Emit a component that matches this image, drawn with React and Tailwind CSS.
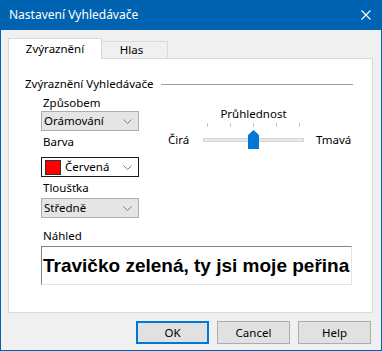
import React from 'react';

const ui = { fontFamily: '"Noto Sans", "Segoe UI", sans-serif' };

function Chevron() {
  return (
    <svg width="9" height="5" viewBox="0 0 9 5" className="shrink-0">
      <path d="M0.5 0.5 L4.5 4.5 L8.5 0.5" fill="none" stroke="#7a7a7a" strokeWidth="1" />
    </svg>
  );
}

function Combo({ children }) {
  return (
    <div className="h-[20px] w-[98px] flex items-center justify-between pl-[2px] pr-[6px] bg-[#e5e5e5] border border-[#adadad] text-[#000]">
      <span>{children}</span>
      <Chevron />
    </div>
  );
}

function Button({ children, primary }) {
  return (
    <div
      className={
        'w-[73px] h-[23px] flex items-center justify-center bg-[#e1e1e1] ' +
        (primary ? 'border-2 border-[#0078d7]' : 'border border-[#adadad]')
      }
    >
      {children}
    </div>
  );
}

export default function App() {
  return (
    <div className="w-[382px] h-[351px] bg-[#0063b1] flex flex-col text-[11.5px] leading-[16px] text-black" style={ui}>
      {/* title bar */}
      <div className="h-[30px] flex items-center justify-between pl-[9px] pr-[11px] text-white text-[12px]">
        <span>Nastavení Vyhledávače</span>
        <svg width="10" height="10" viewBox="0 0 10 10">
          <path d="M0.5 0.5 L9.5 9.5 M9.5 0.5 L0.5 9.5" stroke="#fff" strokeWidth="1.1" />
        </svg>
      </div>

      <div className="flex-1 mx-px mb-px bg-[#f0f0f0] flex flex-col pt-[8px] pl-[7px] pr-[8px]">
        {/* tabs */}
        <div className="flex items-end h-[20px]">
          <div className="relative z-10 w-[94px] h-[21px] -mb-px bg-white border border-b-0 border-[#d9d9d9] flex items-center justify-center">
            Zvýraznění
          </div>
          <div className="w-[66px] h-[17px] border-t border-r border-[#d9d9d9] flex items-center justify-center pr-[6px]">
            Hlas
          </div>
        </div>

        {/* panel */}
        <div className="h-[255px] bg-white border border-[#d9d9d9] pt-[17px] pl-[16px] pr-[19px]">
          <div className="flex items-center h-[16px]">
            <span>Zvýraznění Vyhledávače</span>
            <div className="flex-1 h-px bg-[#a0a0a0] ml-[8px]" />
          </div>

          <div className="flex ml-[16px] mt-[3px]">
            <div className="w-[98px] flex flex-col">
              <div className="pl-[2px] h-[16px]">Způsobem</div>
              <Combo>Orámování</Combo>
              <div className="pl-[2px] h-[16px] mt-[3px]">Barva</div>
              <div className="mt-[7px] h-[20px] w-[98px] flex items-center justify-between pl-[3px] pr-[6px] bg-white border border-[#1a1a1a]">
                <div className="flex items-center gap-[4px]">
                  <div className="w-[16px] h-[15px] bg-[#ff0000] border border-[#333]" />
                  <span>Červená</span>
                </div>
                <Chevron />
              </div>
              <div className="pl-[2px] h-[16px] mt-[3px]">Tloušťka</div>
              <div className="mt-[2px]">
                <Combo>Středně</Combo>
              </div>
            </div>

            <div className="ml-[29px] pt-[11px] flex flex-col">
              <div className="ml-[35px] w-[101px] text-center h-[16px]">Průhlednost</div>
              <div className="ml-[35px] w-[101px] h-[5px] mt-[1px] flex justify-between px-[4px]">
                {[0, 1, 2, 3, 4].map((i) => (
                  <div key={i} className="w-px h-[4px] bg-[#c4c4c4]" />
                ))}
              </div>
              <div className="flex items-center h-[21px] mt-px">
                <span className="w-[35px]">Čirá</span>
                <div className="relative w-[101px] h-[21px]">
                  <div className="absolute left-0 right-0 top-[9px] h-[4px] bg-[#e7eaea] border border-[#d6d6d6]" />
                  <svg className="absolute left-[45px] top-[1px]" width="11" height="19" viewBox="0 0 11 19">
                    <polygon points="0,5 5.5,0 11,5 11,19 0,19" fill="#0078d7" />
                  </svg>
                </div>
                <span className="ml-[12px]">Tmavá</span>
              </div>
            </div>
          </div>

          <div className="ml-[16px] mt-[10px]">
            <div className="pl-[2px] h-[16px]">Náhled</div>
            <div className="mt-[2px] w-[311px] h-[39px] border-t border-l border-[#838383] border-r-[#e3e3e3] border-b-[#e3e3e3] border-r border-b flex items-center pl-[1px] overflow-hidden">
              <span className="font-bold text-[19px] whitespace-nowrap" style={{ fontFamily: '"Liberation Sans", Arial, sans-serif' }}>
                Travičko zelená, ty jsi moje peřina
              </span>
            </div>
          </div>
        </div>

        {/* buttons */}
        <div className="flex justify-end gap-[8px] mt-[8px] pr-[2px]">
          <Button primary>OK</Button>
          <Button>Cancel</Button>
          <Button>Help</Button>
        </div>
      </div>
    </div>
  );
}
